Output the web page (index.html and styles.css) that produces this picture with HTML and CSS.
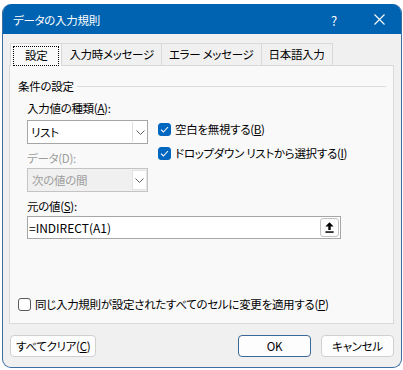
FILE: index.html
```html
<!DOCTYPE html>
<html lang="ja">
<head>
    <meta charset="UTF-8">
    <title>データの入力規則</title>
    <link rel="stylesheet" href="styles.css">
</head>
<body>
    <div class="dialog">
        <div class="titlebar">
            <span class="title">データの入力規則</span>
            <span class="cap-btn help">?</span>
            <span class="cap-btn close">
                <svg width="11" height="11" viewBox="0 0 11 11"><path d="M0.5 0.5L10.5 10.5M10.5 0.5L0.5 10.5" stroke="#fff" stroke-width="1.1"/></svg>
            </span>
        </div>
        <div class="dialog-body">
            <div class="tabs">
                <div class="tab active"><span class="focus-ring">設定</span></div>
                <div class="tab">入力時メッセージ</div>
                <div class="tab">エラー メッセージ</div>
                <div class="tab">日本語入力</div>
            </div>
            <div class="panel">
                <div class="group-title">
                    <span>条件の設定</span>
                    <span class="rule"></span>
                </div>
                <div class="criteria">
                    <div class="criteria-left">
                        <div class="label">入力値の種類(<u>A</u>):</div>
                        <div class="select">
                            <span class="select-value">リスト</span>
                            <span class="select-btn">
                                <svg width="9" height="5" viewBox="0 0 9 5"><path d="M0.5 0.5L4.5 4.5L8.5 0.5" fill="none" stroke="#606060"/></svg>
                            </span>
                        </div>
                        <div class="label disabled">データ(D):</div>
                        <div class="select is-disabled">
                            <span class="select-value">次の値の間</span>
                            <span class="select-btn">
                                <svg width="9" height="5" viewBox="0 0 9 5"><path d="M0.5 0.5L4.5 4.5L8.5 0.5" fill="none" stroke="#606060"/></svg>
                            </span>
                        </div>
                    </div>
                    <div class="criteria-right">
                        <div class="check">
                            <span class="box checked">
                                <svg width="9" height="7" viewBox="0 0 9 7"><path d="M1 3.6L3.4 6L8 1" fill="none" stroke="#fff" stroke-width="1.1"/></svg>
                            </span>
                            <span>空白を無視する(<u>B</u>)</span>
                        </div>
                        <div class="check">
                            <span class="box checked">
                                <svg width="9" height="7" viewBox="0 0 9 7"><path d="M1 3.6L3.4 6L8 1" fill="none" stroke="#fff" stroke-width="1.1"/></svg>
                            </span>
                            <span>ドロップダウン リストから選択する(<u>I</u>)</span>
                        </div>
                    </div>
                </div>
                <div class="source">
                    <div class="label">元の値(<u>S</u>):</div>
                    <div class="input">
                        <span class="input-value">=INDIRECT(A1)</span>
                        <span class="ref-btn">
                            <svg width="9" height="11" viewBox="0 0 9 11"><path d="M4.5 0.3L8.6 4.6H5.7V8H3.3V4.6H0.4Z" fill="#000"/><rect x="0.4" y="9.3" width="8.2" height="1.5" fill="#000"/></svg>
                        </span>
                    </div>
                </div>
                <div class="check apply">
                    <span class="box"></span>
                    <span>同じ入力規則が設定されたすべてのセルに変更を適用する(<u>P</u>)</span>
                </div>
            </div>
            <div class="buttons">
                <button class="btn">すべてクリア(<u>C</u>)</button>
                <span class="spacer"></span>
                <button class="btn default">OK</button>
                <button class="btn">キャンセル</button>
            </div>
        </div>
    </div>
</body>
</html>
```

FILE: styles.css
```css
body {
    margin: 0;
    background-color: #fff;
    font-family: "Noto Sans CJK JP", sans-serif;
    font-size: 11.5px;
    letter-spacing: -0.3px;
    color: #000;
    font-feature-settings: "palt";
}

.dialog {
    width: 400px;
    height: 364px;
    margin: 4px 0 0 2px;
    box-sizing: border-box;
    border: 1px solid #3c6da3;
    border-top: none;
    border-radius: 9px;
    overflow: hidden;
    background-color: #f0f0f0;
    display: flex;
    flex-direction: column;
}

/* title bar */
.titlebar {
    height: 30px;
    flex: none;
    background-color: #0063b1;
    color: #fff;
    display: flex;
    align-items: center;
    padding-left: 10px;
}

.title {
    flex: 1;
    padding-top: 2px;
}

.cap-btn {
    height: 30px;
    display: flex;
    align-items: center;
    justify-content: center;
}

.help {
    width: 46px;
    font-size: 13px;
    padding-top: 2px;
    box-sizing: border-box;
}

.close {
    width: 44px;
}

.dialog-body {
    flex: 1;
    display: flex;
    flex-direction: column;
    padding: 9px 7px 10px 6px;
}

/* tabs */
.tabs {
    display: flex;
    align-items: flex-start;
    height: 23px;
    margin: 0 0 -1px 1px;
}

.tab {
    height: 22px;
    box-sizing: border-box;
    border: 1px solid #d9d9d9;
    border-bottom: none;
    padding: 0 7px;
    line-height: 21px;
    background-color: #f0f0f0;
}

.tab + .tab {
    margin-left: -1px;
}

.tab.active {
    height: 23px;
    padding: 2px 2px 0;
    background-color: #f9f9f9;
    position: relative;
    z-index: 1;
}

.focus-ring {
    display: block;
    height: 20px;
    box-sizing: border-box;
    border: 1px dotted #000;
    padding: 0 11px;
    line-height: 17px;
}

/* panel */
.panel {
    flex: 1;
    border: 1px solid #d9d9d9;
    background-color: #f9f9f9;
    display: flex;
    flex-direction: column;
    padding: 12px 7px 11px 8px;
}

.group-title {
    display: flex;
    align-items: center;
    line-height: 16px;
}

.rule {
    flex: 1;
    height: 1px;
    margin-left: 3px;
    background-color: #dcdcdc;
}

.label {
    line-height: 16px;
}

.label.disabled {
    color: #9d9d9d;
}

.criteria {
    display: flex;
    margin: 6px 0 0 9px;
}

.criteria-left {
    width: 121px;
    display: flex;
    flex-direction: column;
}

.criteria-left .select {
    margin: 4px 0 6px;
}

.criteria-left .select.is-disabled {
    margin: 2px 0 0;
}

.criteria-right {
    margin-left: 10px;
    padding-top: 21px;
    display: flex;
    flex-direction: column;
    gap: 8px;
}

.select {
    height: 24px;
    box-sizing: border-box;
    border: 1px solid #a6a6a6;
    background-color: #fff;
    display: flex;
}

.select-value {
    flex: 1;
    padding-left: 3px;
    line-height: 22px;
}

.select-btn {
    width: 15px;
    margin: 1px 0 1px 1px;
    box-sizing: border-box;
    border-left: 1px solid #dedede;
    display: flex;
    align-items: center;
    justify-content: center;
}

.select.is-disabled {
    background-color: #f0f0f0;
    border-color: #c4c4c4;
    color: #9d9d9d;
}

.select.is-disabled .select-value {
    padding-left: 4px;
}

.select.is-disabled .select-btn {
    background-color: #fff;
    border: 1px solid #e2e2e2;
}

/* checkboxes */
.check {
    display: flex;
    align-items: center;
    gap: 4px;
    line-height: 16px;
}

.box {
    width: 13px;
    height: 13px;
    box-sizing: border-box;
    border: 1px solid #5a5a5a;
    border-radius: 3px;
    background-color: #fff;
    display: flex;
    align-items: center;
    justify-content: center;
}

.box.checked {
    border-color: #0067c0;
    background-color: #0067c0;
}

.source {
    margin: 6px 0 0 9px;
}

.input {
    width: 314px;
    height: 23px;
    margin-top: 2px;
    box-sizing: border-box;
    border: 1px solid #a6a6a6;
    background-color: #fff;
    display: flex;
    align-items: center;
}

.input-value {
    flex: 1;
    padding-left: 1px;
    line-height: 21px;
    font-size: 12px;
    letter-spacing: 0;
}

.ref-btn {
    width: 19px;
    height: 19px;
    margin-right: 1px;
    box-sizing: border-box;
    border: 1px solid #c2c2c2;
    border-radius: 3px;
    background-color: #fdfdfd;
    display: flex;
    align-items: center;
    justify-content: center;
}

.check.apply {
    margin-top: auto;
}

/* buttons */
.buttons {
    display: flex;
    gap: 10px;
    margin-top: 11px;
    margin-left: 1px;
}

.spacer {
    flex: 1;
}

.btn {
    height: 22px;
    padding: 0 5px;
    border: 1px solid #d0d0d0;
    border-radius: 4px;
    background-color: #fdfdfd;
    font-family: inherit;
    font-size: inherit;
    letter-spacing: inherit;
    font-feature-settings: "palt";
    color: #000;
}

.btn.default,
.btn:last-child {
    width: 73px;
}

.btn.default {
    border-color: #3a6898;
}
```
